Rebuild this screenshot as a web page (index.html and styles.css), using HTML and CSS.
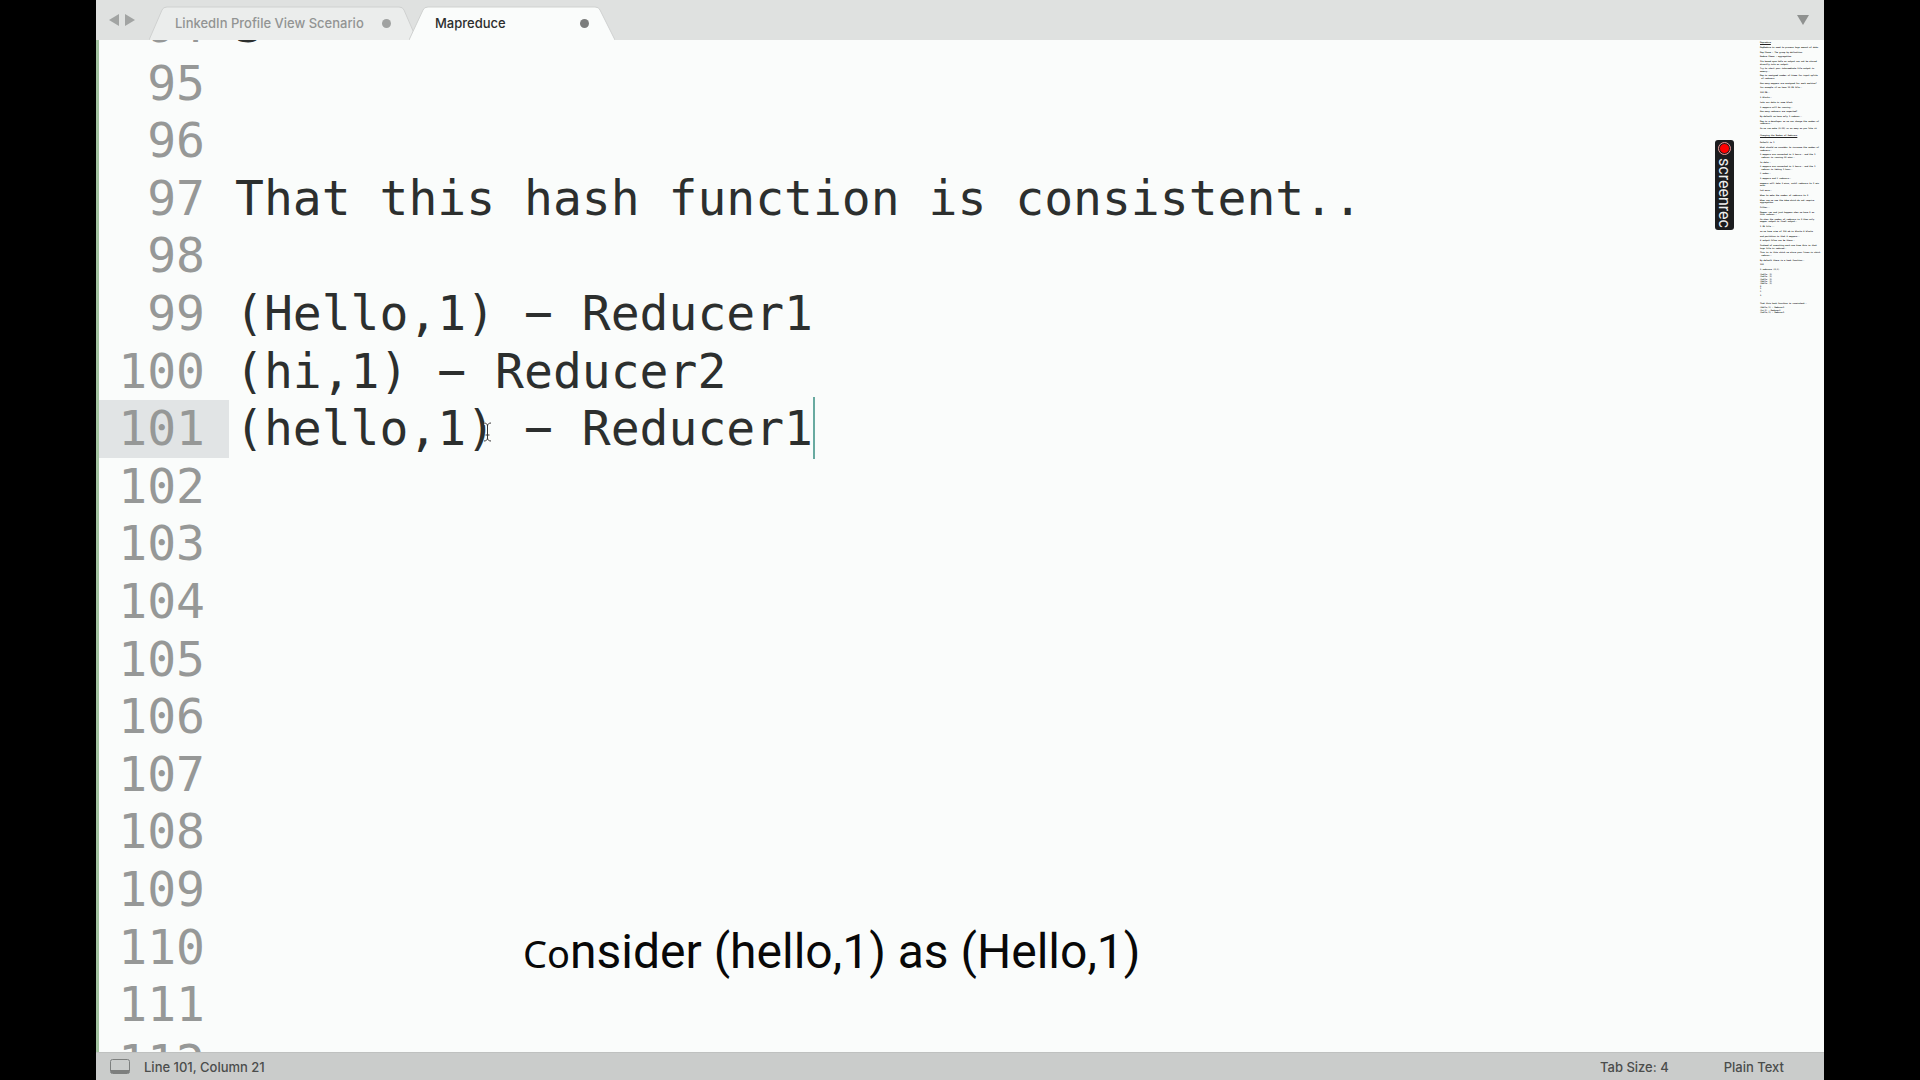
FILE: index.html
```html
<!DOCTYPE html>
<html lang="en">
<head>
<meta charset="utf-8">
<title>Mapreduce</title>
<link rel="stylesheet" href="styles.css">
</head>
<body>
<div class="window">
  <header class="tabbar">
    <button class="arrow" aria-label="Previous tab"><svg width="10" height="12" viewBox="0 0 10 12"><path d="M10 0v12L0 6z"/></svg></button>
    <button class="arrow" aria-label="Next tab"><svg width="10" height="12" viewBox="0 0 10 12"><path d="M0 0v12l10-6z"/></svg></button>
    <nav class="tabs">
      <button class="tab">
        <svg class="tab-shape" viewBox="0 0 268 34" preserveAspectRatio="none"><path d="M0 34L13 4Q14 1 18 1H250Q254 1 255 4L268 34"/></svg>
        <span class="tab-name">LinkedIn Profile View Scenario</span><span class="dot"></span>
      </button>
      <button class="tab tab-active">
        <svg class="tab-shape" viewBox="0 0 206 34" preserveAspectRatio="none"><path d="M0 34L14 4Q15 1 19 1H186Q190 1 191 4L206 34"/></svg>
        <span class="tab-name">Mapreduce</span><span class="dot"></span>
      </button>
    </nav>
    <button class="menu" aria-label="Tab list"><svg width="12" height="10" viewBox="0 0 12 10"><path d="M0 0h12L6 10z"/></svg></button>
  </header>
  <main class="editor">
    <ol class="lines">
      <li><span class="num">94</span><code>3</code></li>
      <li><span class="num">95</span><code></code></li>
      <li><span class="num">96</span><code></code></li>
      <li><span class="num">97</span><code>That this hash function is consistent..</code></li>
      <li><span class="num">98</span><code></code></li>
      <li><span class="num">99</span><code>(Hello,1) − Reducer1</code></li>
      <li><span class="num">100</span><code>(hi,1) − Reducer2</code></li>
      <li class="current"><span class="num">101</span><code>(hello,1<span class="pointed">)<svg class="pointer" width="9" height="20" viewBox="0 0 9 20"><path class="halo" d="M1 1C3 1 4.500 2 4.500 4V16C4.500 18 3 19 1 19M8 1C6 1 4.500 2 4.500 4M8 19C6 19 4.500 18 4.500 16M2.500 13h4"/><path d="M1 1C3 1 4.500 2 4.500 4V16C4.500 18 3 19 1 19M8 1C6 1 4.500 2 4.500 4M8 19C6 19 4.500 18 4.500 16M2.500 13h4"/></svg></span> − Reducer1<i class="caret"></i></code></li>
      <li><span class="num">102</span><code></code></li>
      <li><span class="num">103</span><code></code></li>
      <li><span class="num">104</span><code></code></li>
      <li><span class="num">105</span><code></code></li>
      <li><span class="num">106</span><code></code></li>
      <li><span class="num">107</span><code></code></li>
      <li><span class="num">108</span><code></code></li>
      <li><span class="num">109</span><code></code></li>
      <li><span class="num">110</span><code></code></li>
      <li><span class="num">111</span><code></code></li>
      <li><span class="num">112</span><code></code></li>
    </ol>
    <pre class="minimap"><u>Mapreduce</u>

MapReduce is used to process huge amount of data.

Map Phase - The group by definition

Reduce Phase - aggregation

Its based upon hdfs so output can not be stored
directly into an output.

Try to start your intermediate file output in
memory..

Map is assigned number of times for input splits
 of reducers

How many mappers are assigned for each machine?

for example if we have 10 GB file..

100 MB..

3 blocks..

Lets our data in some block

3 mappers will be running..

How many reducers are expected?

By default we have only 1 reducer..

Map is a developer so we can change the number of
reducers..

So we can make (0-10) or as many as you like it


<u>Changing the Number of Reducers</u>


Default is 1

What should we consider to increase the number of
reducers..

3 mappers are connected in 3 hours.. and the 1
 reducer is running 30 mins..

3x data..

3 mappers are connected in 3 hours.. and the 1
 reducer is taking 1 hour..

2 nodes..

3 mappers and 2 reducers..

mappers will take 3 mins, until reducers to 5 min
more.

Lot more..

When to make the number of reducers to 0

When can we use the idea which do not require
aggregation

Filter..

Mapper can and just happens when we have 0 as
this reducer..

So when the number of reducers is 0 then only
mapper output is final output..

1 GB file ..

so we have size of 128 mb in blocks 8 blocks

and partition is that 8 mappers..

8 output files can be there..

Instead of executing each one time this is that
huge file is reduced..

This is in this which we store your lines in which
 reducer..

By default there is a hash function..

100

3 reducers (0,2)

(hello ,1)
(hello ,1)
(hello ,1)
(Hello ,1)
(Hello ,1)
0
1
2

3


That this hash function is consistent..

(Hello,1) - Reducer1
(hi,1) - Reducer2
(hello,1) - Reducer1</pre>
    <aside class="badge"><i class="rec"></i><span>screenrec</span></aside>
    <p class="caption"><span class="caption-start">Co</span>nsider (hello,1) as (Hello,1)</p>
  </main>
  <footer class="status">
    <svg width="20" height="15" viewBox="0 0 20 15"><rect x=".5" y=".5" width="19" height="14" rx="2"/><path d="M1 11h18v3H1z"/></svg>
    <span class="position">Line 101, Column 21</span>
    <button>Tab Size: 4</button>
    <button>Plain Text</button>
  </footer>
</div>
</body>
</html>
```
FILE: styles.css
```css
* { box-sizing: border-box; }
body { margin: 0; background: #000; }
button { border: 0; padding: 0; background: none; font: inherit; color: inherit; }
.window {
  display: flex;
  flex-direction: column;
  height: 100vh;
  margin: 0 5%;
  background: #fafcfb;
  font-family: Inter, "Liberation Sans", sans-serif;
}
.tabbar {
  display: flex;
  flex: 0 0 40px;
  align-items: center;
  padding: 0 15px 0 13px;
  background: #dfe1e0;
}
.arrow { display: flex; width: 16px; fill: #a2a4a3; }
.menu { display: flex; margin-left: auto; fill: #8f9190; }
.tabs { display: flex; align-self: flex-end; margin-left: 8px; }
.tab {
  position: relative;
  display: flex;
  align-items: center;
  justify-content: space-between;
  width: 268px;
  height: 34px;
  padding: 0 26px;
  font-size: 13px;
  font-weight: 500;
  color: #929493;
}
.tab-active { width: 206px; margin-left: -8px; color: #2c2e2d; }
.tab-shape { position: absolute; inset: 0; width: 100%; height: 100%; fill: #ebedec; stroke: #cfd1d0; }
.tab-active .tab-shape { fill: #fafcfb; }
.tab-name, .dot { position: relative; }
.dot { width: 9px; height: 9px; border-radius: 50%; background: #a0a2a1; }
.tab-active .dot { background: #7b7d7c; }
.editor {
  position: relative;
  display: flex;
  flex: 1;
  min-height: 0;
  overflow: hidden;
  border-left: 3px solid #a3c3a0;
}
.lines {
  flex: 1;
  margin: -43px 0 0;
  padding: 0;
  list-style: none;
  font: 48px/1.2 "DejaVu Sans Mono", monospace;
  color: #2c2f2e;
}
.lines li { display: flex; height: 1.2em; }
.lines code { position: relative; font: inherit; white-space: pre; margin-left: 6px; }
.num { width: 130px; padding-right: 24px; text-align: right; color: #969897; }
.current .num { background: #e1e4e5; }
.pointed { position: relative; }
.pointer { position: absolute; right: 3px; bottom: 14px; fill: none; stroke: #333; }
.halo { stroke: #fff; stroke-width: 3; }
.caret { position: absolute; top: -3px; right: -2px; width: 2px; height: 62px; background: #68aaa0; }
.minimap {
  width: 65px;
  margin: 0;
  padding: 1px 0 0 1px;
  overflow: hidden;
  font: bold 2px/1.2 "DejaVu Sans Mono", monospace;
  color: #222;
}
.badge {
  position: absolute;
  top: 100px;
  right: 90px;
  display: flex;
  align-items: center;
  justify-content: space-between;
  width: 19px;
  height: 90px;
  padding: 3px 0 2px;
  border-radius: 3px;
  background: #1b1c1e;
  color: #eee;
  font: 16px/19px Roboto, sans-serif;
  writing-mode: vertical-rl;
}
.rec { flex: none; width: 11px; height: 11px; border: 1px solid #1b1c1e; outline: 1px solid #e99; border-radius: 50%; background: #f00; }
.caption {
  position: absolute;
  left: 424px;
  bottom: 71px;
  margin: 0;
  font: 48px/56px Roboto, sans-serif;
  color: #080808;
}
.caption-start { font: 38px/56px "Noto Sans", sans-serif; }
.status {
  display: flex;
  flex: 0 0 28px;
  align-items: center;
  padding: 0 40px 0 14px;
  border-top: 1px solid #bfc1c0;
  background: #cacccb;
  font-size: 13px;
  font-weight: 500;
  color: #4b4d4c;
}
.status svg { margin-right: 14px; fill: #7d7f7e; }
.status rect { fill: none; stroke: #7d7f7e; }
.position { margin-right: auto; }
.status button { margin-left: 55px; }
```
